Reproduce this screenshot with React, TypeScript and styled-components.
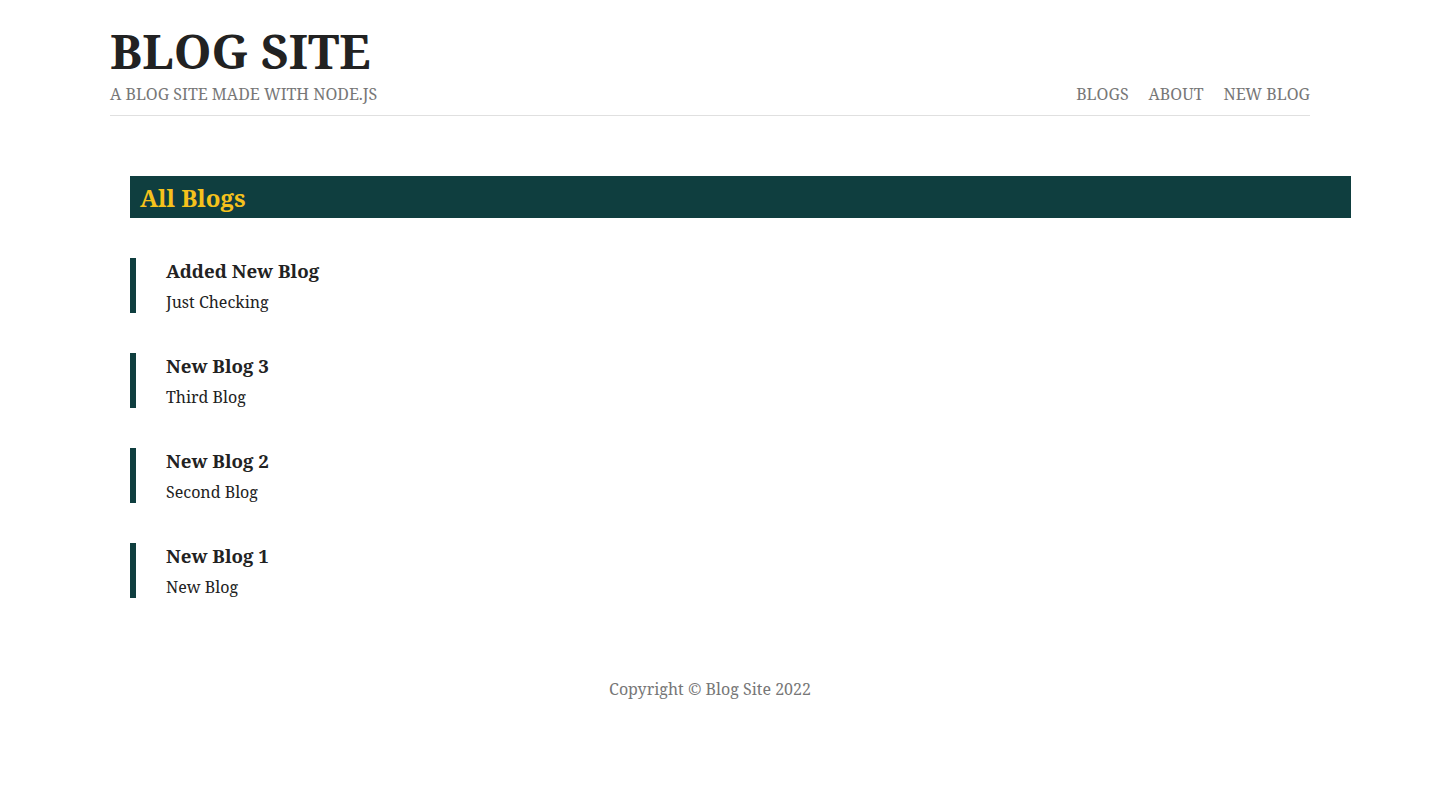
import React from "react";
import styled, { createGlobalStyle } from "styled-components";

const GlobalStyle = createGlobalStyle`
  body {
    margin: 0;
    background: #fff;
    font-family: "Noto Serif", "DejaVu Serif", "Liberation Serif", serif;
    color: #222;
  }
`;

const Page = styled.div`
  width: 1420px;
`;

const Header = styled.header`
  width: 1200px;
  margin: 0 auto;
  padding: 22px 0 9px;
  display: flex;
  justify-content: space-between;
  align-items: flex-end;
  border-bottom: 1px solid #e0e0e0;
`;

const Brand = styled.div`
  display: flex;
  flex-direction: column;
`;

const SiteTitle = styled.h1`
  margin: 0 0 2px;
  font-size: 48px;
  font-weight: 700;
  line-height: 58px;
  color: #222;
`;

const Tagline = styled.p`
  margin: 0;
  font-size: 16px;
  line-height: 24px;
  color: #777;
  text-transform: uppercase;
`;

const Nav = styled.nav`
  display: flex;
  gap: 20px;
`;

const NavLink = styled.a`
  font-size: 16px;
  line-height: 24px;
  color: #777;
  text-decoration: none;
  text-transform: uppercase;
`;

const Main = styled.main`
  margin: 60px 0 0 130px;
  width: 1221px;
`;

const SectionTitle = styled.h2`
  margin: 0;
  height: 42px;
  padding: 0 10px;
  display: flex;
  align-items: center;
  background: #0f3e3f;
  color: #f6c21c;
  font-size: 24px;
  font-weight: 700;
`;

const BlogList = styled.div`
  margin-top: 40px;
  display: flex;
  flex-direction: column;
  gap: 40px;
`;

const BlogItem = styled.article`
  border-left: 6px solid #0f3e3f;
  padding-left: 30px;
  height: 55px;
  display: flex;
  flex-direction: column;
  justify-content: space-between;
`;

const BlogTitle = styled.h3`
  margin: 0;
  font-size: 18.72px;
  font-weight: 700;
  line-height: 26px;
  color: #222;
`;

const BlogSnippet = styled.p`
  margin: 0;
  font-size: 16px;
  line-height: 22px;
  color: #222;
`;

const Footer = styled.footer`
  margin-top: 79px;
  text-align: center;
  font-size: 16px;
  line-height: 24px;
  color: #777;
`;

const blogs = [
  { title: "Added New Blog", snippet: "Just Checking" },
  { title: "New Blog 3", snippet: "Third Blog" },
  { title: "New Blog 2", snippet: "Second Blog" },
  { title: "New Blog 1", snippet: "New Blog" },
];

export default function App() {
  return (
    <Page>
      <GlobalStyle />
      <Header>
        <Brand>
          <SiteTitle>BLOG SITE</SiteTitle>
          <Tagline>A Blog Site made with Node.js</Tagline>
        </Brand>
        <Nav>
          <NavLink href="#">Blogs</NavLink>
          <NavLink href="#">About</NavLink>
          <NavLink href="#">New Blog</NavLink>
        </Nav>
      </Header>
      <Main>
        <SectionTitle>All Blogs</SectionTitle>
        <BlogList>
          {blogs.map((b) => (
            <BlogItem key={b.title}>
              <BlogTitle>{b.title}</BlogTitle>
              <BlogSnippet>{b.snippet}</BlogSnippet>
            </BlogItem>
          ))}
        </BlogList>
      </Main>
      <Footer>Copyright © Blog Site 2022</Footer>
    </Page>
  );
}
